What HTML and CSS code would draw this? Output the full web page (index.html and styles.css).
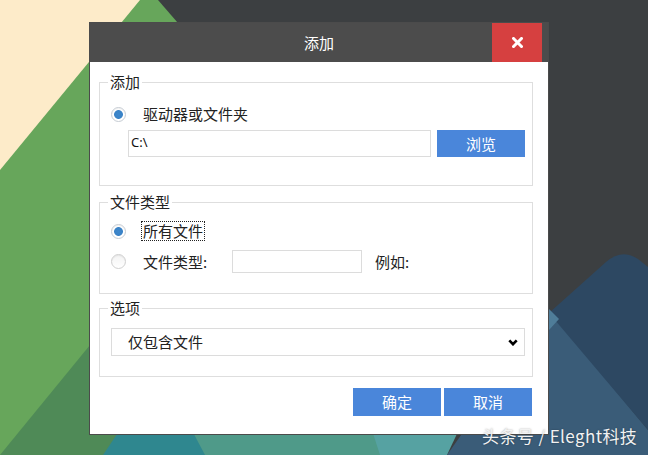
FILE: index.html
```html
<!DOCTYPE html>
<html lang="zh-CN">
<head>
<meta charset="utf-8">
<title>添加</title>
<link rel="stylesheet" href="styles.css">
</head>
<body>
<div class="desktop">
  <svg class="wallpaper" width="648" height="455" viewBox="0 0 648 455" aria-hidden="true">
    <rect width="648" height="455" fill="#3c3f41"/>
    <polygon points="0,0 158,0 470,360 110,455 0,455" fill="#67a65b"/>
    <polygon points="0,0 140,0 0,170" fill="#fdebc9"/>
    <polygon points="135,290 0,455 210,455 260,330" fill="#4f8a57"/>
    <polygon points="150,340 200,455 385,455 400,330" fill="#4f9a89"/>
    <polygon points="103,455 160,370 205,455" fill="#2f878f"/>
    <polygon points="330,300 380,455 447,455 520,300" fill="#56a2a2"/>
    <polygon points="549,310 648,430 648,455 447,455" fill="#3a5c78"/>
    <path d="M549,313 L606,262 Q622,248 638,259 L648,267 L648,430 Z" fill="#2d4862"/>
    <polygon points="549,309 559,319 549,330" fill="#4f7d99"/>
  </svg>

  <div class="dialog">
    <div class="titlebar">
      <span class="title">添加</span>
      <span class="close">
        <svg width="11" height="11" viewBox="0 0 11 11"><path d="M1.5 1.5 L9.5 9.5 M9.5 1.5 L1.5 9.5" stroke="#fff" stroke-width="3" stroke-linecap="square"/></svg>
      </span>
    </div>

    <div class="dialog-body">
      <fieldset class="group group-add">
        <legend>添加</legend>
        <div class="option">
          <span class="radio checked"></span>
          <span class="label">驱动器或文件夹</span>
        </div>
        <div class="path-row">
          <input class="path-input" type="text" value="C:\">
          <button class="btn">浏览</button>
        </div>
      </fieldset>

      <fieldset class="group group-type">
        <legend>文件类型</legend>
        <div class="option">
          <span class="radio checked"></span>
          <span class="label focus">所有文件</span>
        </div>
        <div class="option option-typed">
          <span class="radio"></span>
          <span class="label type-label">文件类型:</span>
          <input class="type-input" type="text">
          <span class="label example">例如:</span>
        </div>
      </fieldset>

      <fieldset class="group group-opts">
        <legend>选项</legend>
        <div class="select">
          <span>仅包含文件</span>
          <svg class="chevron" width="10" height="7" viewBox="0 0 10 7"><path d="M1.3 1.3 L5 5.2 L8.7 1.3" fill="none" stroke="#000" stroke-width="2.6"/></svg>
        </div>
      </fieldset>

      <div class="actions">
        <button class="btn">确定</button>
        <button class="btn">取消</button>
      </div>
    </div>
  </div>

  <div class="watermark">头条号 / Eleght科技</div>
</div>
</body>
</html>
```

FILE: styles.css
```css
* {
  box-sizing: border-box;
}

html, body {
  margin: 0;
  padding: 0;
  background: #3c3f41;
}

body {
  font-family: "Noto Sans CJK SC", "Noto Sans", sans-serif;
  font-size: 15px;
  color: #222;
}

.desktop {
  position: relative;
  width: 648px;
  height: 455px;
  overflow: hidden;
}

.wallpaper {
  position: absolute;
  left: 0;
  top: 0;
  display: block;
}

.dialog {
  position: absolute;
  left: 89px;
  top: 22px;
  width: 460px;
  height: 413px;
  border: 1px solid #4b4b4b;
  background: #fff;
  display: flex;
  flex-direction: column;
}

.titlebar {
  height: 39px;
  background: #4c4c4c;
  display: grid;
  grid-template-columns: 56px 1fr 56px;
  align-items: center;
  flex: none;
}

.title {
  grid-column: 2;
  text-align: center;
  color: #fff;
  font-size: 15px;
  line-height: 20px;
}

.close {
  grid-column: 3;
  width: 50px;
  height: 39px;
  background: #d64040;
  display: flex;
  align-items: center;
  justify-content: center;
}

.close svg {
  display: block;
}

.dialog-body {
  padding: 0 15px 0 9px;
}

.group {
  margin: 0;
  border: 1px solid #dedede;
  min-width: 0;
}

.group legend {
  padding: 0 2px;
  margin-left: -3px;
  font-size: 15px;
  line-height: 20px;
}

.group-add {
  margin-top: 10px;
  padding: 11px 7px 28px 11px;
}

.group-type {
  margin-top: 6px;
  padding: 8px 7px 20px 11px;
}

.group-opts {
  margin-top: 4px;
  padding: 10px 7px 20px 11px;
}

.option {
  display: flex;
  align-items: center;
  height: 22px;
}

.option-typed {
  height: 23px;
  margin-top: 8px;
}

.radio {
  flex: none;
  width: 15px;
  height: 15px;
  margin-right: 17px;
  border-radius: 50%;
  border: 1px solid #cfcfcf;
  background: linear-gradient(#f3f3f3, #fff);
  box-shadow: inset 0 1px 1px rgba(0, 0, 0, 0.06);
}

.radio.checked {
  border-color: #c6ccd3;
  background: radial-gradient(circle at 50% 50%, #3d87cc 0, #3a82c6 4px, #fff 4.8px);
}

.label {
  line-height: 20px;
  white-space: nowrap;
}

.focus {
  display: inline-block;
  line-height: 18px;
  padding: 0 1px;
  margin-left: -1px;
  outline: 1px dotted #222;
}

.type-label {
  width: 89px;
  flex: none;
}

.type-input {
  width: 130px;
  height: 23px;
  border: 1px solid #dcdcdc;
  padding: 0;
  margin: 0;
  flex: none;
}

.example {
  margin-left: 13px;
}

.path-row {
  display: flex;
  gap: 6px;
  margin-top: 5px;
  margin-left: 17px;
  height: 27px;
}

.path-input {
  flex: 1;
  min-width: 0;
  height: 27px;
  margin: 0;
  border: 1px solid #dcdcdc;
  padding: 0 2px 4px;
  font-family: "Noto Sans", "Open Sans", sans-serif;
  font-size: 13px;
  color: #111;
}

.btn {
  flex: none;
  width: 88px;
  height: 27px;
  margin: 0;
  padding: 0;
  border: none;
  background: #4a86da;
  color: #fff;
  font-family: "Noto Sans CJK SC", sans-serif;
  font-size: 15px;
  line-height: 20px;
}

.select {
  height: 28px;
  border: 1px solid #dcdcdc;
  display: flex;
  align-items: center;
  justify-content: space-between;
  padding: 0 6px 0 16px;
  line-height: 20px;
}

.chevron {
  display: block;
}

.actions {
  display: flex;
  justify-content: flex-end;
  gap: 3px;
  margin-top: 11px;
  padding-right: 1px;
}

.actions .btn {
  height: 28px;
}

.watermark {
  position: absolute;
  left: 482px;
  top: 425px;
  font-size: 17px;
  line-height: 22px;
  color: #f2f2f2;
  letter-spacing: 0.4px;
  text-shadow: 0 0 2px rgba(0, 0, 0, 0.35);
  white-space: nowrap;
}
```
